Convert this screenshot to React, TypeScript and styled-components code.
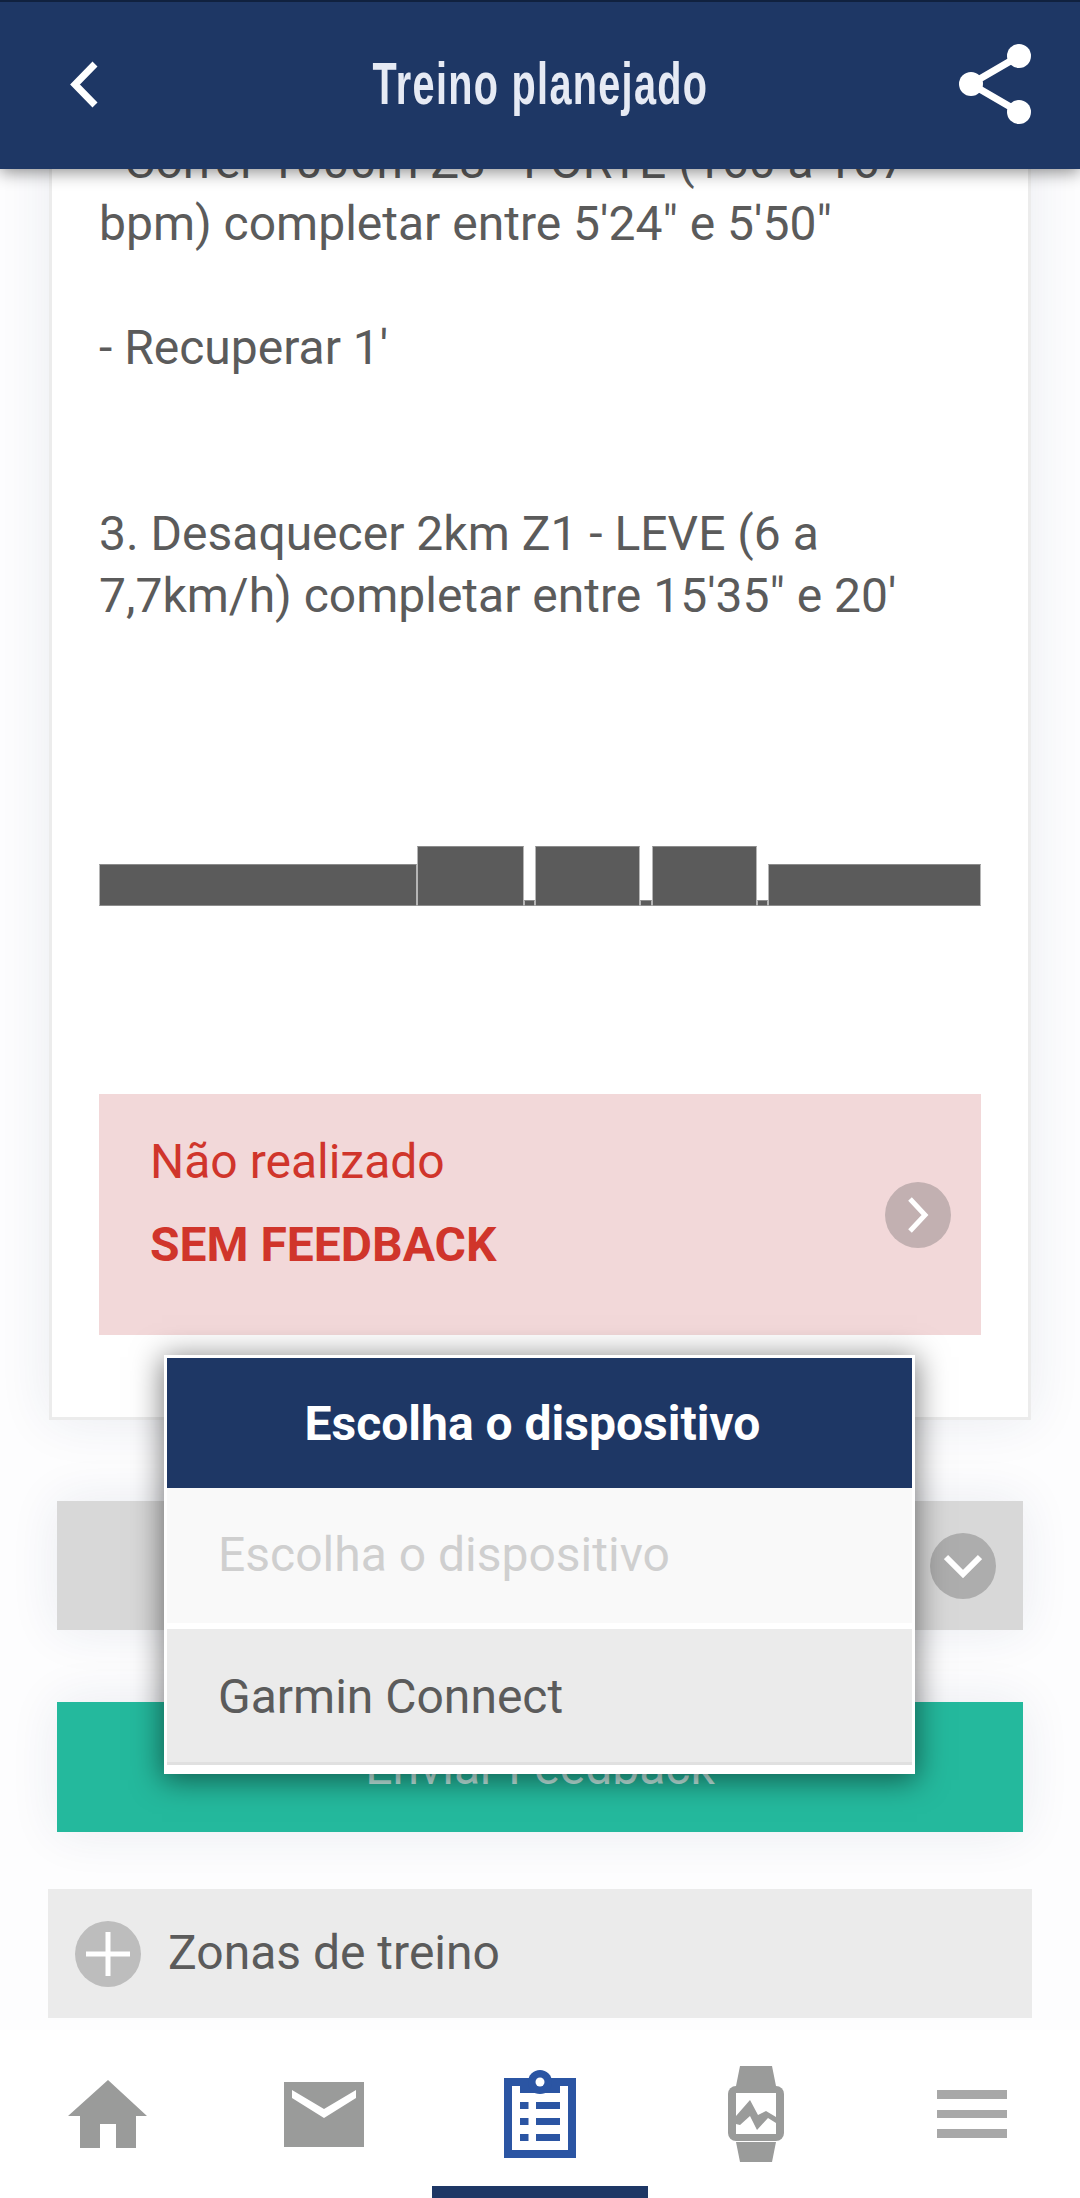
import React from 'react';
import styled, { createGlobalStyle } from 'styled-components';

const GlobalStyle = createGlobalStyle`
  html, body {
    margin: 0;
    padding: 0;
    background: #fdfdfe;
  }
  body {
    font-family: Roboto, "Liberation Sans", sans-serif;
    color: #5b5b5b;
  }
`;

const Screen = styled.div`
  position: relative;
  width: 1080px;
  height: 2198px;
  overflow: hidden;
  display: flex;
  flex-direction: column;
`;

const Header = styled.header`
  position: relative;
  z-index: 2;
  flex: 0 0 169px;
  box-sizing: border-box;
  border-top: 2px solid #10213f;
  background: #1e3765;
  box-shadow: 0 3px 16px rgba(0, 0, 0, 0.45);
  display: grid;
  grid-template-columns: 1fr auto 1fr;
  align-items: center;
  padding: 0 47px;
`;

const BackIcon = styled.svg`
  justify-self: start;
  width: 30px;
  height: 47px;
  margin: -3px 0 0 22px;
`;

const ShareIcon = styled.svg`
  justify-self: end;
  width: 74px;
  height: 80px;
  margin-top: -3px;
`;

const Title = styled.h1`
  margin: -3px 0 0;
  font-family: "Liberation Sans", sans-serif;
  font-size: 60px;
  font-weight: 700;
  line-height: 1;
  letter-spacing: 2px;
  color: #e6eaf4;
  white-space: nowrap;
  transform: scaleX(0.66);
`;

const Content = styled.main`
  flex: 1;
  min-height: 0;
  overflow: hidden;
  display: flex;
  flex-direction: column;
`;

const Card = styled.section`
  box-sizing: border-box;
  width: 982px;
  margin: -61px auto 0;
  padding: 20px 47px 82px;
  background: #fff;
  border: 3px solid #ececec;
  box-shadow: 0 0 50px rgba(30, 55, 101, 0.09);
`;

const Workout = styled.p`
  margin: 0;
  font-size: 48px;
  line-height: 62px;
  white-space: pre-line;
  height: 495px;
`;

const Chart = styled.div`
  display: flex;
  align-items: flex-end;
  height: 60px;
  margin-top: 220px;
`;

const Bar = styled.div<{ $width: number; $height: number }>`
  box-sizing: border-box;
  flex: 0 0 ${props => props.$width}px;
  height: ${props => props.$height}px;
  background: #5b5b5b;
  border: 1px solid #8c8c8c;
  border-left-color: #b5b5b5;
  border-right-color: #b5b5b5;
`;

const Status = styled.div`
  box-sizing: border-box;
  height: 241px;
  margin-top: 188px;
  padding: 38px 30px 0 51px;
  background: #f2d8d9;
  color: #d0352b;
  display: flex;
  justify-content: space-between;
  align-items: center;
`;

const StatusText = styled.div`
  align-self: flex-start;
`;

const StatusLabel = styled.div`
  font-size: 48px;
  line-height: 60px;
`;

const StatusValue = styled.div`
  font-size: 48px;
  font-weight: 700;
  line-height: 60px;
  margin-top: 23px;
`;

const RoundIcon = styled.span<{ $bg: string }>`
  flex: 0 0 66px;
  width: 66px;
  height: 66px;
  border-radius: 50%;
  background: ${props => props.$bg};
  display: flex;
  align-items: center;
  justify-content: center;
`;

const StatusArrow = styled(RoundIcon)`
  margin-top: -38px;
`;

const Select = styled.div`
  box-sizing: border-box;
  width: 966px;
  height: 129px;
  margin: 81px auto 0;
  padding-right: 27px;
  background: #d8d8d8;
  box-shadow: 0 0 50px rgba(30, 55, 101, 0.09);
  display: flex;
  justify-content: flex-end;
  align-items: center;
`;

const SendButton = styled.button`
  display: block;
  width: 966px;
  height: 130px;
  margin: 72px auto 0;
  padding: 0;
  border: 0;
  background: #24b99d;
  color: rgba(255, 255, 255, 0.72);
  font-family: inherit;
  font-size: 48px;
  box-shadow: 0 0 50px rgba(30, 55, 101, 0.09);
`;

const Accordion = styled.div`
  box-sizing: border-box;
  width: 984px;
  height: 129px;
  margin: 57px auto 0;
  padding-left: 27px;
  background: #ebebeb;
  display: flex;
  align-items: center;
  gap: 27px;
  font-size: 48px;
`;

const AccordionLabel = styled.span`
  margin-top: -2px;
`;

const BottomNav = styled.nav`
  position: relative;
  z-index: 1;
  flex: 0 0 168px;
  background: #fff;
  display: grid;
  grid-template-columns: repeat(5, 1fr);
`;

const NavItem = styled.div`
  position: relative;
  display: flex;
  align-items: center;
  justify-content: center;
`;

const ActiveMark = styled.span`
  position: absolute;
  left: 0;
  right: 0;
  bottom: 0;
  height: 12px;
  background: #1e3765;
`;

const Modal = styled.div`
  position: absolute;
  z-index: 3;
  left: 164px;
  top: 1355px;
  box-sizing: border-box;
  width: 751px;
  height: 419px;
  padding: 3px 3px 9px;
  background: #fff;
  box-shadow: 0 4px 28px 2px rgba(0, 0, 0, 0.5);
`;

const ModalTitle = styled.div`
  box-sizing: border-box;
  height: 130px;
  padding-right: 14px;
  background: #1e3765;
  color: #fff;
  font-size: 48px;
  font-weight: 700;
  display: flex;
  align-items: center;
  justify-content: center;
`;

const Option = styled.div<{ $placeholder?: boolean }>`
  box-sizing: border-box;
  height: ${props => (props.$placeholder ? 135 : 136)}px;
  margin-bottom: ${props => (props.$placeholder ? 6 : 0)}px;
  padding-left: 51px;
  padding-top: ${props => (props.$placeholder ? 0 : 2)}px;
  padding-bottom: ${props => (props.$placeholder ? 3 : 0)}px;
  background: ${props => (props.$placeholder ? '#f9f9f9' : '#ebebeb')};
  border-bottom: ${props => (props.$placeholder ? 'none' : '3px solid #e0e0e0')};
  color: ${props => (props.$placeholder ? '#cfcfcf' : '#5b5b5b')};
  font-size: 48px;
  display: flex;
  align-items: center;
`;

const chartBars = [
  { width: 318, height: 42 },
  { width: 107, height: 60 },
  { width: 11, height: 6 },
  { width: 105, height: 60 },
  { width: 12, height: 6 },
  { width: 105, height: 60 },
  { width: 11, height: 6 },
  { width: 213, height: 42 },
];

const workoutText = `- Correr 1000m Z3 - FORTE (160 a 167
bpm) completar entre 5'24" e 5'50"

- Recuperar 1'


3. Desaquecer 2km Z1 - LEVE (6 a
7,7km/h) completar entre 15'35" e 20'`;

const App: React.FC = () => {
  return (
    <Screen>
      <GlobalStyle />
      <Header>
        <BackIcon viewBox="0 0 30 47">
          <polyline points="26,3 6,23.5 26,44" fill="none" stroke="#fff" strokeWidth="7" />
        </BackIcon>
        <Title>Treino planejado</Title>
        <ShareIcon viewBox="0 0 74 80">
          <g fill="#fff">
            <circle cx="60" cy="12" r="12" />
            <circle cx="12" cy="40" r="12" />
            <circle cx="60" cy="68" r="12" />
          </g>
          <polyline points="60,12 12,40 60,68" fill="none" stroke="#fff" strokeWidth="7" />
        </ShareIcon>
      </Header>

      <Content>
        <Card>
          <Workout>{workoutText}</Workout>
          <Chart>
            {chartBars.map((bar, index) => (
              <Bar key={index} $width={bar.width} $height={bar.height} />
            ))}
          </Chart>
          <Status>
            <StatusText>
              <StatusLabel>Não realizado</StatusLabel>
              <StatusValue>SEM FEEDBACK</StatusValue>
            </StatusText>
            <StatusArrow $bg="#c2b0b1">
              <svg width="22" height="36" viewBox="0 0 22 36">
                <polyline points="3,2 18,18 3,34" fill="none" stroke="#fff" strokeWidth="5" />
              </svg>
            </StatusArrow>
          </Status>
        </Card>

        <Select>
          <RoundIcon $bg="#adadad">
            <svg width="38" height="24" viewBox="0 0 38 24">
              <polyline points="2,3 19,20 36,3" fill="none" stroke="#fff" strokeWidth="6" />
            </svg>
          </RoundIcon>
        </Select>

        <SendButton>Enviar Feedback</SendButton>

        <Accordion>
          <RoundIcon $bg="#bdbdbd">
            <svg width="44" height="44" viewBox="0 0 44 44">
              <path d="M22 0V44M0 22H44" fill="none" stroke="#fff" strokeWidth="5" />
            </svg>
          </RoundIcon>
          <AccordionLabel>Zonas de treino</AccordionLabel>
        </Accordion>
      </Content>

      <BottomNav>
        <NavItem>
          <svg width="80" height="68" viewBox="0 0 80 68">
            <path d="M40 0L0 36H12V68H32V44H48V68H68V36H79Z" fill="#9a9b9a" />
          </svg>
        </NavItem>
        <NavItem>
          <svg width="80" height="65" viewBox="0 0 80 65">
            <rect width="80" height="65" fill="#9a9b9a" />
            <path d="M8 8L40 27L72 8V16L40 36L8 16Z" fill="#fff" />
          </svg>
        </NavItem>
        <NavItem>
          <svg width="72" height="88" viewBox="0 0 72 88">
            <rect y="8" width="72" height="80" fill="#2b55a3" />
            <rect x="8" y="16" width="56" height="64" fill="#fff" />
            <rect x="16" y="8" width="40" height="15" fill="#2b55a3" />
            <circle cx="36" cy="12" r="12" fill="#2b55a3" />
            <circle cx="36" cy="12" r="4.5" fill="#fff" />
            <g fill="#2b55a3">
              <rect x="16" y="32" width="8.5" height="7" />
              <rect x="32" y="32" width="24" height="7" />
              <rect x="16" y="48" width="8.5" height="7" />
              <rect x="32" y="48" width="24" height="7" />
              <rect x="16" y="64" width="8.5" height="7" />
              <rect x="32" y="64" width="24" height="7" />
            </g>
          </svg>
          <ActiveMark />
        </NavItem>
        <NavItem>
          <svg width="56" height="96" viewBox="0 0 56 96">
            <path d="M12 0H44L48 20H8ZM8 76H48L44 96H12Z" fill="#9a9b9a" />
            <rect y="20" width="56" height="55" rx="8" fill="#9a9b9a" />
            <rect x="8" y="27" width="40" height="41" fill="#fff" />
            <path d="M8 50L22 34L30 49L38 45L48 51V57L40 52L29 64L22 50L12 59L8 58Z" fill="#9a9b9a" />
          </svg>
        </NavItem>
        <NavItem>
          <svg width="70" height="48" viewBox="0 0 70 48">
            <path d="M0 0H70V9H0ZM0 20H70V28H0ZM0 39H70V48H0Z" fill="#a8a8a8" />
          </svg>
        </NavItem>
      </BottomNav>

      <Modal>
        <ModalTitle>Escolha o dispositivo</ModalTitle>
        <Option $placeholder>Escolha o dispositivo</Option>
        <Option>Garmin Connect</Option>
      </Modal>
    </Screen>
  );
};

export default App;
